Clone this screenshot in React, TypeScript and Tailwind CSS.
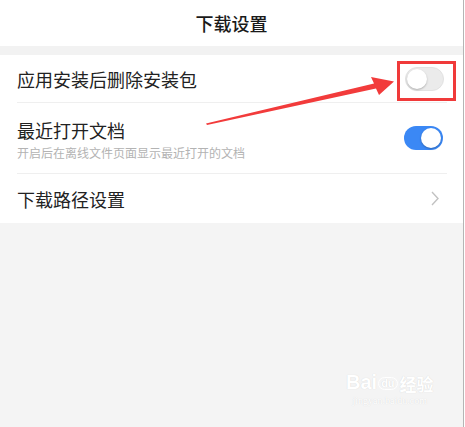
type ToggleProps = {
    on?: boolean;
};

function Toggle({ on }: ToggleProps) {
    return (
        <div
            className={
                on
                    ? "flex items-center justify-end w-[39px] h-[24px] rounded-full bg-[#3b88f5] px-[2px]"
                    : "flex items-center justify-start w-[39px] h-[24px] rounded-full bg-[#ebebeb] border border-[#e2e2e2] px-[1px]"
            }
        >
            <div className="w-[20px] h-[20px] rounded-full bg-white shadow-[0_1px_2px_rgba(0,0,0,0.25)]" />
        </div>
    );
}

export default function App() {
    return (
        <div
            className="relative flex w-[465px] h-[427px] bg-white overflow-hidden"
            style={{ fontFamily: '"Noto Sans CJK SC", "Noto Sans", sans-serif' }}
        >
            <div className="flex flex-col w-[463px] h-full bg-[#f4f4f4]">
                <div className="flex items-center justify-center h-[46px] bg-white">
                    <h1 className="text-[18px] font-medium text-[#1a1a1a]">下载设置</h1>
                </div>
                <div className="h-[9px] bg-[#f2f2f2]" />

                <div className="bg-white">
                    <div className="flex items-center justify-between h-[48px] ml-[17px] mr-[16px] border-b border-[#efefef]">
                        <span className="text-[18px] leading-[24px] text-[#222]">应用安装后删除安装包</span>
                        <div className="mr-[3px]">
                            <Toggle />
                        </div>
                    </div>

                    <div className="flex items-center justify-between h-[71px] ml-[17px] mr-[16px] border-b border-[#efefef]">
                        <div className="flex flex-col gap-[3px] pt-[2px]">
                            <span className="text-[18px] leading-[24px] text-[#222]">最近打开文档</span>
                            <span className="text-[12px] leading-[16px] text-[#b3b3b3]">开启后在离线文件页面显示最近打开的文档</span>
                        </div>
                        <div className="mr-[4px]">
                            <Toggle on />
                        </div>
                    </div>

                    <div className="flex items-center justify-between h-[49px] ml-[17px] mr-[16px]">
                        <span className="text-[18px] leading-[24px] text-[#222]">下载路径设置</span>
                        <svg className="mr-[8px]" width="8" height="15" viewBox="0 0 8 15" fill="none">
                            <polyline points="1,1 7,7.5 1,14" stroke="#c2c2c2" strokeWidth="1.4" />
                        </svg>
                    </div>
                </div>
            </div>
            <div className="w-[1px] h-full bg-[#b5b5b5]" />
            <div className="w-[1px] h-full bg-white" />

            {/* annotation: red box + arrow */}
            <div className="absolute left-[397px] top-[61px] w-[59px] h-[40px] border-[3px] border-[#f03a3a]" />
            <svg className="absolute left-0 top-0" width="465" height="427" viewBox="0 0 465 427">
                <polygon
                    points="206,123.5 207,125 376,88.5 379,95 394,81.5 371,77 374,83.5"
                    fill="#f23b3b"
                />
            </svg>

            {/* watermark */}
            <div className="absolute left-[346px] top-[372px] flex flex-col items-center text-white [text-shadow:0_0_1px_rgba(0,0,0,0.15)]">
                <div className="flex items-end gap-[1px] leading-none">
                    <span className="text-[20px] font-bold" style={{ fontFamily: '"Liberation Sans", sans-serif' }}>Bai</span>
                    <span className="text-[11px] font-bold rounded-full border border-white px-[2px] mb-[2px]" style={{ fontFamily: '"Liberation Sans", sans-serif' }}>du</span>
                    <span className="text-[17px] font-bold ml-[1px]">经验</span>
                </div>
                <span className="text-[10px] leading-[14px] mt-[2px]" style={{ fontFamily: '"Liberation Serif", serif' }}>jingyan.baidu.com</span>
            </div>
        </div>
    );
}
